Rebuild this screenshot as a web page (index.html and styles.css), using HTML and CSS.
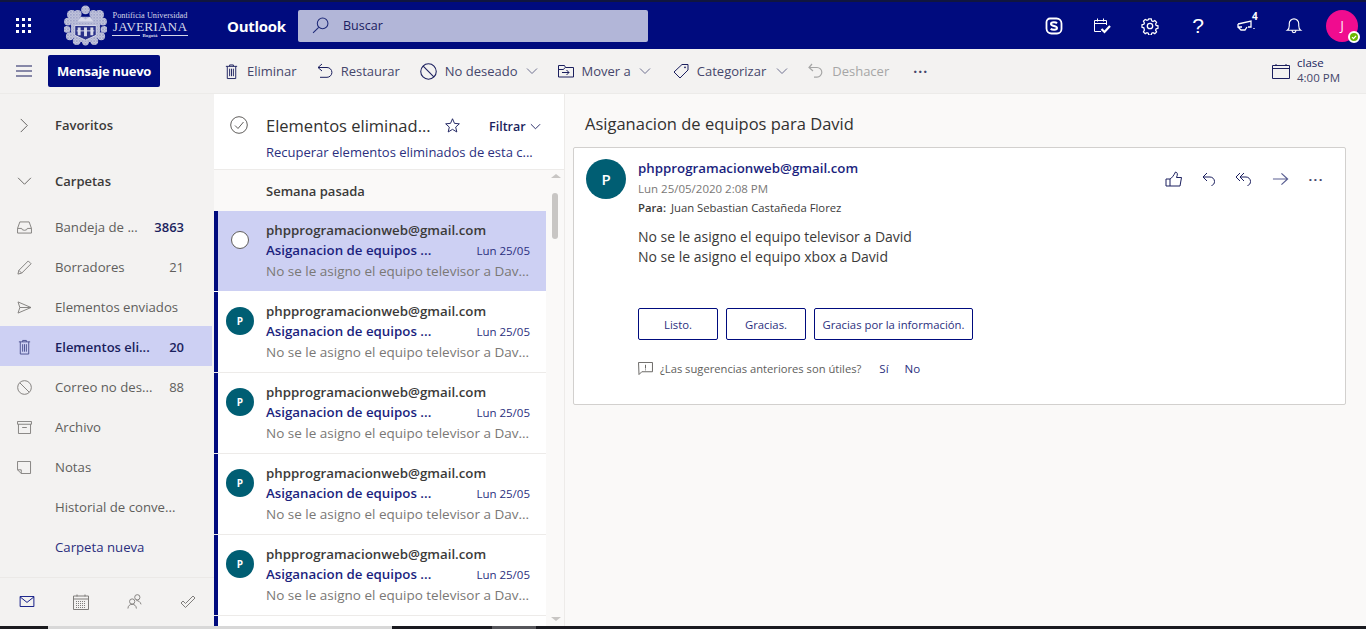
FILE: index.html
```html
<!DOCTYPE html>
<html lang="es">
<head>
<meta charset="utf-8">
<title>Outlook</title>
<link rel="stylesheet" href="styles.css">
</head>
<body>
<svg class="defs" width="0" height="0" aria-hidden="true">
  <symbol id="i-trash" viewBox="0 0 16 16"><path d="M2 2.500h12M6 2.500V1h4v1.500M3.500 2.500v13h9v-13M6 5v8M8 5v8M10 5v8" fill="none" stroke="currentColor"/></symbol>
  <symbol id="i-block" viewBox="0 0 16 16"><circle cx="8" cy="8" r="7.300" fill="none" stroke="currentColor"/><path d="M3 3l10 10" stroke="currentColor"/></symbol>
  <symbol id="i-down" viewBox="0 0 12 12"><path d="M1 3.500l5 5 5-5" fill="none" stroke="currentColor"/></symbol>
  <pattern id="crest-tex" width="3" height="3" patternUnits="userSpaceOnUse"><rect width="3" height="3" fill="#c9cce0"/><circle cx="1" cy="1" r=".7" fill="#5d64a6"/><circle cx="2.500" cy="2.500" r=".4" fill="#7a80b6"/></pattern>
</svg>

<header class="topbar">
  <svg class="waffle" viewBox="0 0 16 16" width="16" height="16"><g fill="#fff"><rect x="0" y="0" width="3" height="3"/><rect x="6" y="0" width="3" height="3"/><rect x="12" y="0" width="3" height="3"/><rect x="0" y="6" width="3" height="3"/><rect x="6" y="6" width="3" height="3"/><rect x="12" y="6" width="3" height="3"/><rect x="0" y="12" width="3" height="3"/><rect x="6" y="12" width="3" height="3"/><rect x="12" y="12" width="3" height="3"/></g></svg>
  <div class="logo">
    <svg class="crest" viewBox="0 0 44 42" width="43" height="41">
      <g fill="url(#crest-tex)">
        <circle cx="22" cy="5" r="4.500"/>
        <circle cx="8" cy="10" r="5"/><circle cx="14" cy="9" r="4"/><circle cx="30" cy="9" r="4"/><circle cx="36" cy="10" r="5"/>
        <circle cx="4" cy="17" r="4"/><circle cx="40" cy="17" r="4"/><circle cx="3" cy="25" r="3.500"/><circle cx="41" cy="25" r="3.500"/>
        <circle cx="6" cy="32" r="4"/><circle cx="38" cy="32" r="4"/><circle cx="13" cy="37" r="4"/><circle cx="31" cy="37" r="4"/><circle cx="22" cy="38" r="3.500"/>
        <path d="M7 12h30v20l-8 6H15l-8-6z"/>
      </g>
      <path d="M11 21h22v10l-11 5-11-5z" fill="#2a3189" stroke="#d8daea"/>
      <g fill="#d8daea"><rect x="14" y="23" width="3" height="8"/><rect x="20.500" y="23" width="3" height="9"/><rect x="27" y="23" width="3" height="8"/><rect x="13" y="26" width="18" height="1"/></g>
      <path d="M14 17l4-5 4 3 4-3 4 5z" fill="#d8daea"/>
    </svg>
    <div class="wordmark">
      <span class="wm-top">Pontificia Universidad</span>
      <span class="wm-main">JAVERIANA</span>
      <span class="wm-sub">Bogotá</span>
    </div>
  </div>
  <span class="appname">Outlook</span>
  <div class="search">
    <svg viewBox="0 0 16 16" width="17" height="17"><circle cx="10" cy="6" r="5" fill="none" stroke="#1f2a78"/><path d="M6.300 9.700L1 15" stroke="#1f2a78"/></svg>
    <span>Buscar</span>
  </div>
  <div class="top-actions">
    <svg class="ta" viewBox="0 0 18 18" width="18" height="18"><path d="M5 1.500h6.500a5 5 0 0 1 5 5V12a4.500 4.500 0 0 1-4.500 4.500H6.500a5 5 0 0 1-5-5V5A3.500 3.500 0 0 1 5 1.500z" fill="none" stroke="#fff" stroke-width="1.800"/><path d="M12 6.300C11 5 6 4.700 6 7c0 2.300 6 1.700 6 4 0 2.300-5 2-6.300.7" fill="none" stroke="#fff" stroke-width="2"/></svg>
    <svg class="ta" viewBox="0 0 18 18" width="18" height="18"><path d="M8 14.500H1.500v-11h12V8M1.500 6.500h12M4.500 1.500v3M10.500 1.500v3" fill="none" stroke="#fff"/><path d="M8.500 12l3 3 5.500-6" fill="none" stroke="#fff" stroke-width="2.200"/></svg>
    <svg class="ta" viewBox="0 0 18 18" width="18" height="18"><circle cx="9" cy="9" r="2.700" fill="none" stroke="#fff" stroke-width="1.300"/><path d="M7.600 1h2.800l.5 2.200 1.500.7 2-1.100 2 2-1.100 2 .6 1.500 2.100.5v2.800l-2.100.6-.6 1.500 1.100 1.900-2 2-2-1.100-1.500.6-.5 2.100H7.600l-.5-2.100-1.500-.6-2 1.100-2-2 1.100-1.900L2.100 11 0 10.400V7.600l2.100-.5.600-1.500-1.100-2 2-2 2 1.100 1.500-.7z" transform="translate(1 1) scale(.889)" fill="none" stroke="#fff" stroke-width="1.400"/></svg>
    <span class="ta help">?</span>
    <span class="ta feedback">
      <svg viewBox="0 0 18 14" width="18" height="14"><path d="M1 5l13-3v6H11M1 5v3h4M1 8l3 3h4l2-3M17 9v1" fill="none" stroke="#fff" stroke-width="1.300"/></svg>
      <b class="fb-count">4</b>
    </span>
    <svg class="ta" viewBox="0 0 18 18" width="16" height="17"><path d="M2 14c1.500-1 2-2.500 2-5V7a5 5 0 0 1 10 0v2c0 2.500.5 4 2 5zM7 14.500a2 2 0 0 0 4 0" fill="none" stroke="#fff" stroke-width="1.200"/></svg>
    <span class="avatar-me">J<i class="presence"><svg viewBox="0 0 8 8" width="8" height="8"><path d="M2 4.200l1.500 1.500L6 2.800" fill="none" stroke="#fff" stroke-width="1.200"/></svg></i></span>
  </div>
</header>

<div class="toolbar">
  <div class="tb-left">
    <svg class="burger" viewBox="0 0 16 12" width="16" height="12"><path d="M0 1h16M0 6h16M0 11h16" stroke="#1b1f5e"/></svg>
    <button class="compose">Mensaje nuevo</button>
  </div>
  <div class="tb-cmds">
    <span class="cmd"><svg width="15" height="17"><use href="#i-trash"/></svg>Eliminar</span>
    <span class="cmd"><svg viewBox="0 0 16 16" width="16" height="16"><path d="M5 1L1 4.500l4 3.500M1 4.500h9a4.800 4.800 0 0 1 0 9.800H3" fill="none" stroke="currentColor"/></svg>Restaurar</span>
    <span class="cmd"><svg width="17" height="17"><use href="#i-block"/></svg>No deseado<svg class="caret" width="12" height="12"><use href="#i-down"/></svg></span>
    <span class="cmd"><svg viewBox="0 0 16 14" width="16" height="14"><path d="M.5 13V1.500h6l1 2h8V13zM.5 5.500h5l1.500-2M4 8.500h7M8.500 6l2.500 2.500L8.500 11" fill="none" stroke="currentColor"/></svg>Mover a<svg class="caret" width="12" height="12"><use href="#i-down"/></svg></span>
    <span class="cmd cmd-cat"><svg viewBox="0 0 16 16" width="16" height="16"><path d="M1 9L9 1.500h6V7l-8 8z" fill="none" stroke="currentColor"/><circle cx="12" cy="4.300" r=".9" fill="currentColor"/></svg>Categorizar<svg class="caret" width="12" height="12"><use href="#i-down"/></svg></span>
    <span class="cmd disabled"><svg viewBox="0 0 16 16" width="16" height="18"><path d="M4 1L1 4.500 5 8M1 4.500h8a4.800 4.800 0 0 1 0 9.600H6" fill="none" stroke="currentColor" stroke-width="1.200"/></svg>Deshacer</span>
    <span class="more">···</span>
  </div>
  <div class="next-event">
    <svg viewBox="0 0 18 16" width="18" height="16"><path d="M.5 2.500h17v13H.5zM.5 5.500h17M4 1v2M14 1v2" fill="none" stroke="#1b1f5e"/></svg>
    <div class="ne-text"><span class="ne-title">clase</span><span>4:00 PM</span></div>
  </div>
</div>

<main class="main">
  <nav class="nav">
    <div class="nav-scroll">
      <div class="nav-head favs"><svg viewBox="0 0 12 16" width="10" height="15"><path d="M2 1l7 7-7 7" fill="none" stroke="#605e5c"/></svg><span>Favoritos</span></div>
      <div class="nav-head folders"><svg viewBox="0 0 16 12" width="15" height="11"><path d="M1 2l7 7 7-7" fill="none" stroke="#605e5c"/></svg><span>Carpetas</span></div>
      <a class="folder">
        <svg viewBox="0 0 16 14" width="15" height="13"><path d="M.5 8L3 1h10l2.500 7v5H.5zM.5 8h4.500a3 2 0 0 0 6 0h4.500" fill="none" stroke="currentColor"/></svg>
        <span class="f-name">Bandeja de ...</span><span class="f-count strong">3863</span>
      </a>
      <a class="folder">
        <svg viewBox="0 0 16 16" width="15" height="15"><path d="M1 15l1-4L12 1l3 3L5 14zM2 11l3 3" fill="none" stroke="currentColor"/></svg>
        <span class="f-name">Borradores</span><span class="f-count">21</span>
      </a>
      <a class="folder">
        <svg viewBox="0 0 16 14" width="15" height="13"><path d="M1 1l14 6-14 6 2-6zM3 7h12" fill="none" stroke="currentColor"/></svg>
        <span class="f-name">Elementos enviados</span>
      </a>
      <a class="folder active">
        <svg width="15" height="16"><use href="#i-trash"/></svg>
        <span class="f-name">Elementos eli...</span><span class="f-count strong">20</span>
      </a>
      <a class="folder">
        <svg width="15" height="15"><use href="#i-block"/></svg>
        <span class="f-name">Correo no des...</span><span class="f-count">88</span>
      </a>
      <a class="folder">
        <svg viewBox="0 0 16 14" width="15" height="13"><path d="M.5.500h15v3H.5zM1.500 3.500v10h13v-10M5.500 7h5" fill="none" stroke="currentColor"/></svg>
        <span class="f-name">Archivo</span>
      </a>
      <a class="folder">
        <svg viewBox="0 0 16 14" width="15" height="13"><path d="M.5.500h14v13H4.500l-4-4zM.5 9.500h4v4" fill="none" stroke="currentColor"/></svg>
        <span class="f-name">Notas</span>
      </a>
      <a class="folder">
        <span class="noicon"></span>
        <span class="f-name">Historial de conve...</span>
      </a>
      <a class="folder newfolder">
        <span class="noicon"></span>
        <span class="f-name">Carpeta nueva</span>
      </a>
    </div>
    <div class="modules">
      <svg class="mod-on" viewBox="0 0 16 12" width="16" height="11"><path d="M.5.500h15v11H.5zM.5 1l7.500 6 7.500-6" fill="none" stroke="currentColor"/></svg>
      <svg viewBox="0 0 16 16" width="16" height="16"><path d="M.5 2h15v13.500H.5zM.5 5h15M4 .5v2M12 .5v2" fill="none" stroke="currentColor"/><path d="M3 7.500h10M3 9.500h10M3 11.500h10M3 13.500h10" stroke="currentColor" stroke-dasharray="1 1"/></svg>
      <svg viewBox="0 0 16 16" width="15" height="15"><circle cx="11" cy="3.500" r="2.800" fill="none" stroke="currentColor"/><circle cx="5.500" cy="8" r="2.800" fill="none" stroke="currentColor"/><path d="M1 15.500c0-6 9-6 9 0M10 7c2 0 4 1 5 4" fill="none" stroke="currentColor"/></svg>
      <svg viewBox="0 0 16 14" width="16" height="14"><path d="M1 8l4.500 4.500L15 3l-2-2-7.500 7.500L3 6z" fill="none" stroke="currentColor"/></svg>
    </div>
  </nav>

  <section class="list">
    <div class="list-head">
      <div class="lh-top">
        <svg class="lh-check" viewBox="0 0 18 18" width="18" height="18"><circle cx="9" cy="9" r="8.300" fill="none" stroke="#605e5c"/><path d="M5 9.500l3 3 5.500-6.500" fill="none" stroke="#605e5c"/></svg>
        <span class="lh-title">Elementos eliminad...</span>
        <svg class="lh-star" viewBox="0 0 16 16" width="15" height="15"><path d="M8 .8l2.100 4.900 5.200.5-3.900 3.500 1.200 5.200L8 12.100 3.400 14.900l1.200-5.200L.7 6.200l5.200-.5z" fill="none" stroke="#1b1f5e"/></svg>
        <span class="lh-filter">Filtrar<svg width="11" height="11" viewBox="0 0 12 12"><path d="M1 3.500l5 5 5-5" fill="none" stroke="#1b1f5e"/></svg></span>
      </div>
      <a class="lh-link">Recuperar elementos eliminados de esta c...</a>
    </div>
    <div class="list-body">
      <div class="rows">
        <div class="group">Semana pasada</div>
        <article class="row selected">
          <div class="row-av"><span class="radio"></span></div>
          <div class="row-txt">
            <div class="r-from">phpprogramacionweb@gmail.com</div>
            <div class="r-sub"><span class="r-subj">Asiganacion de equipos ...</span><span class="r-date">Lun 25/05</span></div>
            <div class="r-prev">No se le asigno el equipo televisor a Dav...</div>
          </div>
        </article>
        <article class="row">
          <div class="row-av"><span class="pav">P</span></div>
          <div class="row-txt">
            <div class="r-from">phpprogramacionweb@gmail.com</div>
            <div class="r-sub"><span class="r-subj">Asiganacion de equipos ...</span><span class="r-date">Lun 25/05</span></div>
            <div class="r-prev">No se le asigno el equipo televisor a Dav...</div>
          </div>
        </article>
        <article class="row">
          <div class="row-av"><span class="pav">P</span></div>
          <div class="row-txt">
            <div class="r-from">phpprogramacionweb@gmail.com</div>
            <div class="r-sub"><span class="r-subj">Asiganacion de equipos ...</span><span class="r-date">Lun 25/05</span></div>
            <div class="r-prev">No se le asigno el equipo televisor a Dav...</div>
          </div>
        </article>
        <article class="row">
          <div class="row-av"><span class="pav">P</span></div>
          <div class="row-txt">
            <div class="r-from">phpprogramacionweb@gmail.com</div>
            <div class="r-sub"><span class="r-subj">Asiganacion de equipos ...</span><span class="r-date">Lun 25/05</span></div>
            <div class="r-prev">No se le asigno el equipo televisor a Dav...</div>
          </div>
        </article>
        <article class="row">
          <div class="row-av"><span class="pav">P</span></div>
          <div class="row-txt">
            <div class="r-from">phpprogramacionweb@gmail.com</div>
            <div class="r-sub"><span class="r-subj">Asiganacion de equipos ...</span><span class="r-date">Lun 25/05</span></div>
            <div class="r-prev">No se le asigno el equipo televisor a Dav...</div>
          </div>
        </article>
        <article class="row"></article>
      </div>
      <div class="scrollbar">
        <i class="sb-up"></i><i class="sb-thumb"></i><i class="sb-down"></i>
      </div>
    </div>
  </section>

  <section class="reading">
    <h1 class="subject">Asiganacion de equipos para David</h1>
    <article class="card">
      <div class="card-head">
        <span class="pav big">P</span>
        <div class="meta">
          <div class="m-from">phpprogramacionweb@gmail.com</div>
          <div class="m-date">Lun 25/05/2020 2:08 PM</div>
          <div class="m-to"><b>Para:</b> Juan Sebastian Castañeda Florez</div>
        </div>
        <div class="msg-actions">
          <svg viewBox="0 0 18 16" width="18" height="16"><path d="M1 8h4v7H1zM5 8c2-1 4-4 5.500-7 2 .5 2.500 2 1 5.500h5L15 15H5" fill="none" stroke="#1b1f5e"/></svg>
          <svg viewBox="0 0 14 16" width="14" height="16"><path d="M5 2L1 6l4 4M1 6h7a4.500 4.500 0 0 1 4.500 4.500c0 2-1 3.500-3 4" fill="none" stroke="#1b1f5e"/></svg>
          <svg viewBox="0 0 18 16" width="18" height="16"><path d="M5 2L1 6l4 4M9 2L5 6l4 4M5 6h6a4.500 4.500 0 0 1 4.500 4.500c0 2-1 3.500-3 4" fill="none" stroke="#1b1f5e"/></svg>
          <svg viewBox="0 0 18 16" width="17" height="16"><path d="M1 8h15.500M10 2l6.500 6-6.500 6" fill="none" stroke="#5a5f92" stroke-width="1.300"/></svg>
          <span class="dots">···</span>
        </div>
      </div>
      <div class="body-text">
        <p>No se le asigno el equipo televisor a David</p>
        <p>No se le asigno el equipo xbox a David</p>
      </div>
      <div class="replies">
        <button class="reply">Listo.</button>
        <button class="reply">Gracias.</button>
        <button class="reply wide">Gracias por la información.</button>
      </div>
      <div class="feedback-q">
        <svg viewBox="0 0 16 14" width="15" height="13"><path d="M.5.500h15v10H4l-3 3zM8 3v4M8 8v1" fill="none" stroke="#605e5c"/></svg>
        <span>¿Las sugerencias anteriores son útiles?</span>
        <a>Sí</a><a>No</a>
      </div>
    </article>
  </section>
</main>
<div class="edge"><i class="edge-a"></i><i class="edge-b"></i><i class="edge-c"></i><i class="edge-d"></i><i class="edge-c2"></i></div>
</body>
</html>
```

FILE: styles.css
```css
* { box-sizing: border-box; }
html, body { margin: 0; padding: 0; height: 629px; overflow: hidden; }
body {
  font-family: "Open Sans", "Noto Sans", "Liberation Sans", sans-serif;
  font-size: 13px;
  color: #323130;
  background: #f3f2f1;
  display: flex;
  flex-direction: column;
  position: relative;
}
.defs { position: absolute; }

/* top bar */
.topbar {
  height: 49px;
  flex: none;
  background: #000b7e;
  border-top: 2px solid #10153f;
  display: flex;
  align-items: center;
  color: #fff;
}
.waffle { margin-left: 16px; flex: none; }
.logo { margin-left: 32px; display: flex; align-items: center; gap: 5px; width: 131px; flex: none; }
.crest { flex: none; margin-top: -1px; }
.wordmark { display: flex; flex-direction: column; font-family: "Liberation Serif", serif; color: #d6d9ea; text-align: center; line-height: 1; width: 76px; flex: none; margin-top: -2px; }
.wm-top { font-size: 8.300px; line-height: 10px; white-space: nowrap; }
.wm-main { font-size: 13.400px; line-height: 12px; letter-spacing: .1px; }
.wm-sub { font-size: 5px; line-height: 6px; display: flex; align-items: center; gap: 3px; justify-content: center; font-weight: 700; }
.wm-sub::before, .wm-sub::after { content: ""; flex: 1; height: 1px; background: #d6d9ea; }
.appname { margin-left: 32px; font-size: 15px; font-weight: 700; width: 71px; flex: none; letter-spacing: -.3px; }
.search {
  width: 350px;
  height: 32px;
  flex: none;
  background: #b2b6d8;
  border-radius: 2px;
  display: flex;
  align-items: center;
  gap: 14px;
  padding-left: 14px;
  color: #1b2060;
  font-size: 12.500px;
}
.top-actions { margin-left: auto; display: flex; align-items: center; height: 100%; padding-right: 8px; }
.ta { width: 48px; flex: none; }
svg.ta { padding: 0 15px; box-sizing: content-box; width: 18px; }
.help { font-size: 21px; font-weight: 400; text-align: center; line-height: 1; font-family: "Liberation Sans", sans-serif; margin-top: -1px; }
.feedback { position: relative; display: flex; justify-content: center; align-items: center; }
.fb-count { position: absolute; top: -10px; left: 30px; font-size: 10px; }
.avatar-me {
  margin-left: 8px;
  width: 32px; height: 32px;
  border-radius: 50%;
  background: #f00c8f;
  font-size: 12px;
  display: flex; align-items: center; justify-content: center;
  position: relative;
}
.presence {
  position: absolute; right: -2px; bottom: -1px;
  width: 12px; height: 12px; border-radius: 50%;
  background: #6bb700; border: 2px solid #fff;
  display: flex;
}
.presence svg { flex: none; }

/* toolbar */
.toolbar {
  height: 45px;
  flex: none;
  background: #f3f2f1;
  display: flex;
  align-items: center;
  border-bottom: 1px solid #ecebe9;
}
.tb-left { width: 214px; flex: none; display: flex; align-items: center; padding-left: 16px; gap: 16px; }
.compose {
  width: 112px; height: 32px;
  background: #000b7e;
  color: #fff;
  border: 0;
  border-radius: 2px;
  font: 700 13px "Open Sans", sans-serif;
  letter-spacing: -.3px;
  padding: 0;
}
.tb-cmds { display: flex; align-items: center; gap: 20px; color: #1b1f5e; padding-left: 10px; }
.cmd { display: inline-flex; align-items: center; gap: 8px; white-space: nowrap; color: #45466b; font-size: 13px; }
.cmd svg { flex: none; color: #1b1f5e; }
.cmd .caret { color: #6e7090; }
.cmd-cat { margin-left: 2px; }
.cmd-cat .caret { margin-left: 2px; }
.cmd.disabled, .cmd.disabled svg { color: #a6a6a6; }
.more { font-size: 14px; letter-spacing: 1px; color: #45466b; margin-left: 4px; font-weight: 700; }
.next-event { margin-left: auto; padding-right: 26px; display: flex; align-items: center; gap: 7px; color: #1b1f5e; margin-top: -2px; }
.next-event svg { margin-top: 2px; }
.ne-text { display: flex; flex-direction: column; font-size: 11.500px; line-height: 15px; color: #45466b; }
.ne-title { color: #1b1f5e; }

/* main */
.main { flex: 1; display: flex; min-height: 0; }
.nav { width: 214px; flex: none; display: flex; flex-direction: column; background: #f3f2f1; }
.nav-scroll { flex: 1; }
.nav-head { height: 40px; display: flex; align-items: center; gap: 0; font-weight: 600; font-size: 13px; color: #3b3a39; }
.nav-head svg { margin-left: 17px; width: 15px; }
.nav-head span { margin-left: 23px; }
.favs { margin-top: 11px; }
.folders { margin-top: 16px; margin-bottom: 5px; }
.folder { height: 40px; display: flex; align-items: center; padding: 2px 28px 0 17px; margin-right: 2px; color: #605e5c; font-size: 13.200px; }
.folder svg { flex: none; width: 15px; color: #7f7d7b; }
.f-name { margin-left: 23px; white-space: nowrap; flex: 1; }
.noicon { width: 15px; flex: none; }
.f-count { color: #605e5c; font-size: 13px; }
.f-count.strong { color: #1b1f5e; font-weight: 600; }
.folder.active { background: #cdd0f3; color: #1b1f5e; font-weight: 600; }
.folder.active .f-name { font-size: 13px; }
.folder.active svg { color: #4a4f8e; }
.newfolder { color: #2b2f7e; }
.modules { height: 52px; flex: none; border-top: 1px solid #ebe9e7; display: flex; align-items: center; justify-content: space-between; padding: 0 18px 4px 19px; color: #7f7d7b; }
.mod-on { color: #000b7e; }

/* list */
.list { width: 351px; flex: none; display: flex; flex-direction: column; background: #fff; border-right: 1px solid #edebe9; }
.list-head { height: 76px; flex: none; padding: 21px 0 0 16px; border-bottom: 1px solid #edebe9; }
.lh-top { display: flex; align-items: center; height: 20px; }
.lh-check { flex: none; margin-right: 18px; }
.lh-title { font-size: 16.500px; font-weight: 500; color: #323130; white-space: nowrap; width: 177px; flex: none; }
.lh-star { margin-left: 2px; flex: none; }
.lh-filter { margin-left: 29px; display: inline-flex; align-items: center; gap: 4px; color: #1b1f5e; font-weight: 600; font-size: 12.500px; margin-top: 2px; }
.lh-link { display: block; margin: 8px 0 0 36px; color: #2b2f7e; font-size: 13px; white-space: nowrap; }
.list-body { flex: 1; display: flex; min-height: 0; background: #faf9f8; }
.rows { width: 332px; flex: none; overflow: hidden; }
.group { height: 41px; padding-left: 52px; display: flex; align-items: center; font-weight: 600; font-size: 13px; color: #3b3a39; }
.row {
  height: 81px;
  background: linear-gradient(to right, #000b7e 4px, #fff 4px);
  border-bottom: 1px solid #edebe9;
  padding-left: 4px;
  display: flex;
}
.row.selected { background: linear-gradient(to right, #000b7e 4px, #cdd0f3 4px); border-bottom-color: #fff; }
.row-av { width: 48px; flex: none; display: flex; justify-content: center; align-items: flex-start; padding-top: 15px; padding-right: 4px; }
.radio { width: 18px; height: 18px; border-radius: 50%; background: #fff; border: 1px solid #605e5c; margin-top: 5px; }
.pav { width: 28px; height: 28px; border-radius: 50%; background: #005e73; color: #fff; font-size: 10px; font-weight: 700; display: flex; align-items: center; justify-content: center; flex: none; }
.row-txt { flex: 1; padding: 9px 16px 0 0; min-width: 0; line-height: 20px; }
.r-from { font-size: 13.300px; font-weight: 600; color: #3b3a39; white-space: nowrap; }
.r-sub { display: flex; justify-content: space-between; align-items: baseline; }
.r-subj { color: #1b1f7e; font-weight: 600; font-size: 13.300px; white-space: nowrap; }
.r-date { color: #2b2f7e; font-size: 11.500px; }
.r-prev { color: #7a7876; font-size: 13.500px; white-space: nowrap; }
.scrollbar { flex: 1; position: relative; }
.sb-up { position: absolute; top: 4px; left: 5px; border: 5px solid transparent; border-top: 0; border-bottom: 4px solid #c8c6c4; }
.sb-thumb { position: absolute; top: 23px; left: 6px; width: 6px; height: 46px; background: #c8c6c4; border-radius: 3px; }
.sb-down { position: absolute; top: 447px; left: 5px; border: 5px solid transparent; border-bottom: 0; border-top: 4px solid #c8c6c4; }

/* reading */
.reading { flex: 1; background: #faf9f8; padding: 0 20px 0 8px; min-width: 0; }
.subject { margin: 0; height: 53px; padding: 17px 0 0 12px; font-size: 16.500px; font-weight: 500; color: #323130; line-height: 26px; }
.card { height: 258px; background: #fff; border: 1px solid #d2d0ce; border-radius: 2px; padding: 11px 0 0 12px; }
.card-head { display: flex; height: 56px; }
.pav.big { width: 40px; height: 40px; font-size: 15px; font-weight: 600; }
.meta { margin-left: 12px; line-height: 19.500px; }
.m-from { color: #1b1f7e; font-size: 13.300px; font-weight: 600; }
.m-date { color: #7a7876; font-size: 11.500px; }
.m-to { color: #3b3a39; font-size: 11.300px; }
.m-to b { font-weight: 600; margin-right: 2px; }
.msg-actions { margin-left: auto; display: flex; align-items: center; gap: 19px; height: 40px; padding-right: 21px; color: #1b1f5e; }
.dots { letter-spacing: 1.500px; font-weight: 700; font-size: 13px; color: #45466b; }
.body-text { margin: 12px 0 0 52px; font-size: 14px; line-height: 20px; color: #3b3a39; }
.body-text p { margin: 0; }
.replies { margin: 41px 0 0 52px; display: flex; gap: 8px; }
.reply { width: 80px; height: 32px; padding: 0; background: #fff; border: 1px solid #000b7e; border-radius: 2px; color: #2b2f7e; font: 400 11.300px "Open Sans", sans-serif; }
.reply.wide { width: 159px; white-space: nowrap; }
.feedback-q { margin: 21px 0 0 52px; display: flex; align-items: center; color: #605e5c; font-size: 11.200px; }
.feedback-q span { margin-left: 7px; }
.feedback-q a { color: #2b2f7e; margin-left: 16px; font-size: 11.500px; }
.feedback-q a:first-of-type { margin-left: 18px; }

/* window bottom edge */
.edge { position: absolute; left: 0; right: 0; bottom: 0; height: 3px; display: flex; }
.edge-a { width: 48px; background: #1b1b1f; }
.edge-b { width: 344px; background: #d8d8d8; }
.edge-c { width: 100px; background: #1a1a20; }
.edge-d { width: 44px; background: #55555a; }
.edge-c2 { flex: 1; background: #1a1a20; }
```
